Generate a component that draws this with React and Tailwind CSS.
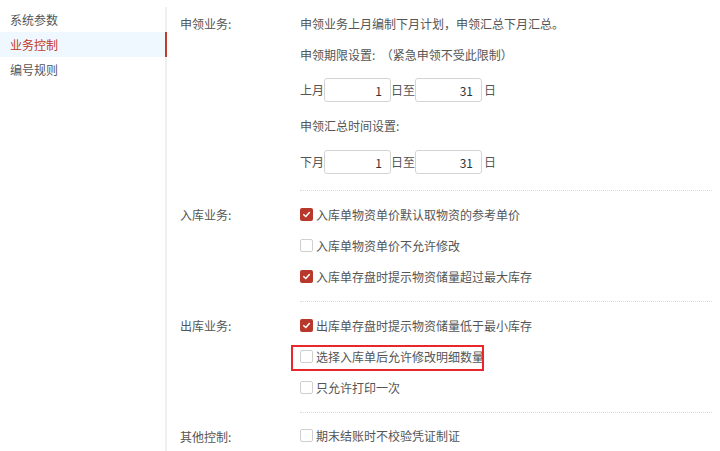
import { useState } from "react";

const font = { fontFamily: '"Noto Sans CJK SC", "Noto Sans", sans-serif' };

const menu = ["系统参数", "业务控制", "编号规则"];

function Checkbox({ checked, label, onToggle }) {
  return (
    <label className="flex h-[31px] cursor-pointer items-center">
      <span
        onClick={onToggle}
        className={
          checked
            ? "flex h-[13px] w-[13px] items-center justify-center rounded-[2px] bg-[#b8382b]"
            : "h-[13px] w-[13px] rounded-[2px] border border-[#cfcfcf] bg-white"
        }
      >
        {checked && (
          <svg width="9" height="9" viewBox="0 0 10 10">
            <path d="M2 5.2 4.2 7.3 8.2 2.8" fill="none" stroke="#fff" strokeWidth="1.7" strokeLinecap="round" strokeLinejoin="round" />
          </svg>
        )}
      </span>
      <span className="ml-[3px] text-[12px] text-[#555]">{label}</span>
    </label>
  );
}

function DayInput({ value }) {
  return (
    <input
      defaultValue={value}
      className="h-[24px] w-[67px] rounded-[3px] border border-[#d4d4d4] bg-white px-[8px] text-right text-[12px] text-[#333] outline-none"
    />
  );
}

function RangeRow({ prefix, from, to }) {
  return (
    <div className="flex h-[24px] items-center text-[12px] text-[#555]">
      <span>{prefix}</span>
      <DayInput value={from} />
      <span>日至</span>
      <DayInput value={to} />
      <span className="ml-[2px]">日</span>
    </div>
  );
}

function Section({ label, children, first }) {
  return (
    <div className="flex">
      <div
        className={
          first
            ? "flex h-[31px] w-[120px] shrink-0 items-center text-[12px] text-[#555]"
            : "mt-[9px] flex h-[31px] w-[120px] shrink-0 items-center text-[12px] text-[#555]"
        }
      >
        {label}
      </div>
      <div className={first ? "flex-1" : "flex-1 border-t border-dotted border-[#dcdcdc]"}>
        {children}
      </div>
    </div>
  );
}

export default function App() {
  const [active, setActive] = useState(1);
  const [checks, setChecks] = useState({
    in1: true,
    in2: false,
    in3: true,
    out1: true,
    out2: false,
    out3: false,
    other1: false,
  });

  const toggle = (k) => setChecks((c) => ({ ...c, [k]: !c[k] }));

  return (
    <div className="flex h-[451px] w-[720px] overflow-hidden bg-white" style={font}>
      <div className="mt-[7px] flex w-[167px] shrink-0 flex-col border-r-2 border-[#efefef]">
        {menu.map((m, i) => (
          <div
            key={m}
            onClick={() => setActive(i)}
            className={
              i === active
                ? "-mr-[2px] flex h-[25px] items-center border-r-2 border-[#c0392b] bg-[#f0f8ff] pl-[10px] text-[12px] text-[#c0392b]"
                : "flex h-[25px] items-center pl-[10px] text-[12px] text-[#555]"
            }
          >
            {m}
          </div>
        ))}
      </div>

      <div className="flex-1 pl-[13px] pr-[8px] pt-[8px]">
        <Section label="申领业务:" first>
          <div className="flex flex-col pb-[16px] text-[12px] text-[#555]">
            <div className="flex h-[31px] items-center">申领业务上月编制下月计划，申领汇总下月汇总。</div>
            <div className="flex h-[31px] items-center">申领期限设置:&nbsp;&nbsp;（紧急申领不受此限制）</div>
            <div className="mt-[8px]">
              <RangeRow prefix="上月" from="1" to="31" />
            </div>
            <div className="mt-[12px] flex h-[24px] items-center">申领汇总时间设置:</div>
            <div className="mt-[12px]">
              <RangeRow prefix="下月" from="1" to="31" />
            </div>
          </div>
        </Section>

        <Section label="入库业务:">
          <div className="pb-[9px] pt-[8px]">
            <Checkbox checked={checks.in1} onToggle={() => toggle("in1")} label="入库单物资单价默认取物资的参考单价" />
            <Checkbox checked={checks.in2} onToggle={() => toggle("in2")} label="入库单物资单价不允许修改" />
            <Checkbox checked={checks.in3} onToggle={() => toggle("in3")} label="入库单存盘时提示物资储量超过最大库存" />
          </div>
        </Section>

        <Section label="出库业务:">
          <div className="pb-[9px] pt-[8px]">
            <Checkbox checked={checks.out1} onToggle={() => toggle("out1")} label="出库单存盘时提示物资储量低于最小库存" />
            <div className="relative">
              <Checkbox checked={checks.out2} onToggle={() => toggle("out2")} label="选择入库单后允许修改明细数量" />
              <div className="pointer-events-none absolute left-[-9px] top-[4px] h-[26px] w-[193px] border-2 border-[#e8262b]" />
            </div>
            <Checkbox checked={checks.out3} onToggle={() => toggle("out3")} label="只允许打印一次" />
          </div>
        </Section>

        <Section label="其他控制:">
          <div className="pt-[7px]">
            <Checkbox checked={checks.other1} onToggle={() => toggle("other1")} label="期末结账时不校验凭证制证" />
          </div>
        </Section>
      </div>
    </div>
  );
}
